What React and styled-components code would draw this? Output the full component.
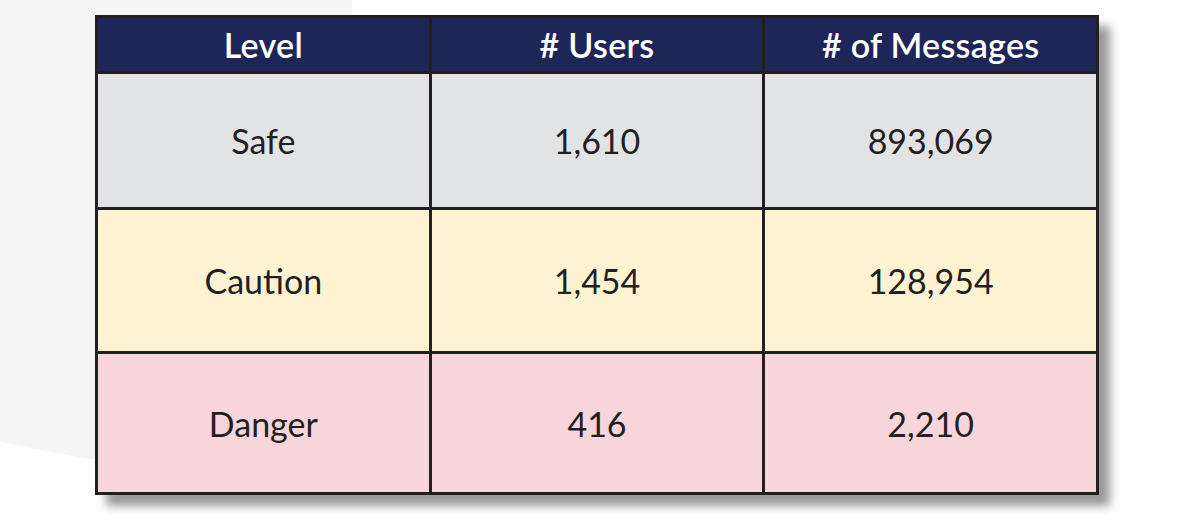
import React from "react";
import styled, { createGlobalStyle } from "styled-components";

const GlobalStyle = createGlobalStyle`
  html, body {
    margin: 0;
    padding: 0;
    background: #ffffff;
  }
  * {
    box-sizing: border-box;
  }
`;

const rows = [
  { level: "Safe", users: "1,610", messages: "893,069", tone: "safe", height: 133 },
  { level: "Caution", users: "1,454", messages: "128,954", tone: "caution", height: 141 },
  { level: "Danger", users: "416", messages: "2,210", tone: "danger", height: 138 },
];

const tones = {
  safe: "#e2e3e5",
  caution: "#fdf3d2",
  danger: "#f8d5da",
};

const App = () => {
  return (
    <Page>
      <GlobalStyle />
      <Blob />
      <Grid $rows={rows.map((r) => r.height)}>
        <HeadCell>Level</HeadCell>
        <HeadCell># Users</HeadCell>
        <HeadCell># of Messages</HeadCell>
        {rows.map((row) => (
          <React.Fragment key={row.level}>
            <Cell $tone={row.tone}>{row.level}</Cell>
            <Cell $tone={row.tone}>{row.users}</Cell>
            <Cell $tone={row.tone}>{row.messages}</Cell>
          </React.Fragment>
        ))}
      </Grid>
    </Page>
  );
};

const Page = styled.div`
  position: relative;
  width: 1200px;
  height: 522px;
  overflow: hidden;
  background: #ffffff;
  padding: 15px 0 0 95px;
  font-family: Lato, "Open Sans", sans-serif;
`;

/* soft grey backdrop shape behind the table, top-left */
const Blob = styled.div`
  position: absolute;
  left: -300px;
  top: -100px;
  width: 652px;
  height: 570px;
  background: #f5f5f5;
  border-radius: 0 0 102px 550px / 0 0 400px 258px;
`;

const Grid = styled.div`
  position: relative;
  width: 1004px;
  display: grid;
  grid-template-columns: repeat(3, 1fr);
  grid-template-rows: 53px ${(p) => p.$rows.map((h) => `${h}px`).join(" ")};
  gap: 3px;
  background: #231f20;
  border: 3px solid #231f20;
  box-shadow: 11px 11px 9px rgba(0, 0, 0, 0.4);
`;

const HeadCell = styled.div`
  display: flex;
  align-items: center;
  justify-content: center;
  background: #1e2557;
  color: #ffffff;
  font-size: 34px;
  font-weight: 600;
  letter-spacing: 0.3px;
  padding-bottom: 1px;
`;

const Cell = styled.div`
  display: flex;
  align-items: center;
  justify-content: center;
  background: ${(p) => tones[p.$tone]};
  color: #231f20;
  font-size: 34px;
  font-weight: 400;
`;

export default App;
